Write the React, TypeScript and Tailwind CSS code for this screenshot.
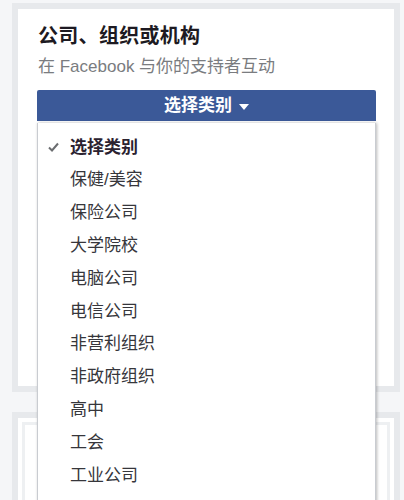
import React from "react";

const FONT = "font-['Liberation_Sans','Noto_Sans_CJK_SC',sans-serif]";

const categories = [
  "保健/美容",
  "保险公司",
  "大学院校",
  "电脑公司",
  "电信公司",
  "非营利组织",
  "非政府组织",
  "高中",
  "工会",
  "工业公司",
];

function Check() {
  return (
    <svg width="11" height="10" viewBox="0 0 11 10" className="shrink-0">
      <path d="M1 5.5 L4 8.5 L10 1.5" fill="none" stroke="#6b6d70" strokeWidth="2" />
    </svg>
  );
}

function Caret() {
  return (
    <svg width="10" height="6" viewBox="0 0 10 6" className="ml-[7px] mt-[2px]">
      <path d="M0 0 H10 L5 6 Z" fill="#ffffff" />
    </svg>
  );
}

function CategoryMenu() {
  return (
    <div className="absolute left-[37px] top-[123px] w-[339px] h-[400px] bg-white border-x border-[#c9ccd1] shadow-[1px_0_3px_rgba(0,0,0,0.28)] pt-[8px]">
      <div className="flex items-center h-[32.8px] pl-[10px]">
        <Check />
        <span className="ml-[11px] text-[17px] font-bold text-[#2b2230]">选择类别</span>
      </div>
      {categories.map((c) => (
        <div key={c} className="flex items-center h-[32.8px] pl-[32px] text-[17px] text-[#36363b]">
          {c}
        </div>
      ))}
    </div>
  );
}

export default function App() {
  return (
    <div className={`relative w-[404px] h-[500px] overflow-hidden bg-[#f5f6f8] pt-[3px] pl-[12px] pr-[4px] ${FONT}`}>
      <section className="h-[389px] border-[6px] border-[#e7e9ec] bg-white pt-[14px] pl-[19px] pr-[18px]">
        <h2 className="pl-[1px] text-[20px] leading-[26px] font-bold text-[#1d1a22] tracking-[0.3px]">公司、组织或机构</h2>
        <p className="mt-[7px] pl-[1px] text-[17px] leading-[22px] text-[#7a7c80]">在 Facebook 与你的支持者互动</p>
        <button className="mt-[12px] flex w-full h-[31px] items-center justify-center rounded-t-[2px] bg-[#3b5998] text-[17px] font-bold text-white">
          选择类别
          <Caret />
        </button>
        <div className="mt-[104px] h-[22px] w-[120px] rounded-[2px] bg-[#4267b2]" />
      </section>
      <section className="mt-[20px] h-[120px] border-[6px] border-[#e7e9ec] bg-white p-[4px]">
        <div className="h-full border-[3px] border-[#eef0f2]" />
      </section>
      <CategoryMenu />
    </div>
  );
}
